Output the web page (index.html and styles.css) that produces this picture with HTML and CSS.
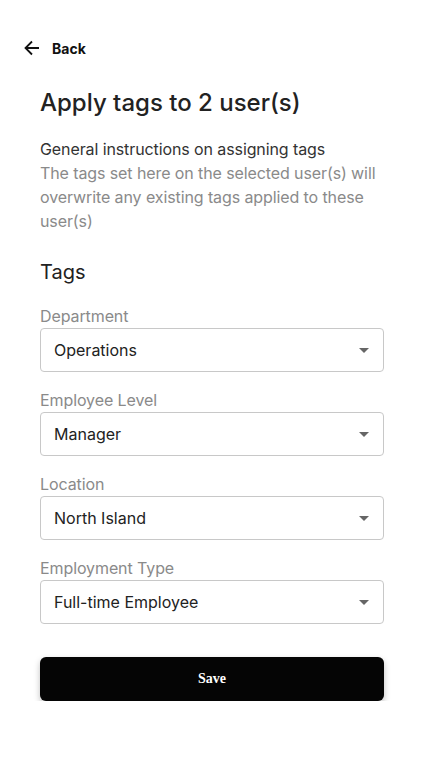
FILE: index.html
```html
<!DOCTYPE html>
<html>
<head>
<meta charset="utf-8">
<link rel="stylesheet" href="styles.css">
</head>
<body>
<div class="page">
  <a class="back" href="#">
    <svg class="back-icon" width="18" height="18" viewBox="0 0 18 18"><path d="M16 9H3M9 2.5L2.5 9L9 15.5" fill="none" stroke="#111" stroke-width="1.8"/></svg>
    <span>Back</span>
  </a>
  <div class="content">
    <h1 class="title">Apply tags to 2 user(s)</h1>
    <p class="intro">General instructions on assigning tags</p>
    <p class="note">The tags set here on the selected user(s) will overwrite any existing tags applied to these user(s)</p>
    <h2 class="section">Tags</h2>
    <div class="field">
      <div class="label">Department</div>
      <div class="select"><span>Operations</span><span class="caret"></span></div>
    </div>
    <div class="field">
      <div class="label">Employee Level</div>
      <div class="select"><span>Manager</span><span class="caret"></span></div>
    </div>
    <div class="field">
      <div class="label">Location</div>
      <div class="select"><span>North Island</span><span class="caret"></span></div>
    </div>
    <div class="field">
      <div class="label">Employment Type</div>
      <div class="select"><span>Full-time Employee</span><span class="caret"></span></div>
    </div>
    <button class="save">Save</button>
  </div>
</div>
</body>
</html>
```
FILE: styles.css
```css
* { box-sizing: border-box; }
body { margin: 0; background: #fff; font-family: Inter, "Noto Sans", sans-serif; color: #222; }
.page { padding: 38px 0 0 0; }
.back { display: flex; align-items: center; gap: 11px; margin-left: 23px; text-decoration: none; color: #111; font-weight: 700; font-size: 14px; height: 20px; }
.back-icon { display: block; }
.content { padding: 0 38px 0 40px; }
.title { margin: 29px 0 0 0; font-size: 24px; font-weight: 500; line-height: 32px; color: #222; letter-spacing: 0; }
.intro { margin: 18px 0 0 0; font-size: 16px; line-height: 24px; color: #333; letter-spacing: -0.1px; }
.note { margin: 0; font-size: 16px; line-height: 24px; color: #8a8a8a; letter-spacing: -0.1px; }
.section { margin: 26px 0 0 0; font-size: 20px; font-weight: 400; line-height: 26px; color: #222; }
.field { margin-top: 20px; }
.field + .field { margin-top: 17px; }
.label { font-size: 16px; line-height: 23px; color: #8a8a8a; letter-spacing: -0.1px; }
.select { height: 44px; border: 1px solid #c8c8c8; border-radius: 4px; display: flex; align-items: center; justify-content: space-between; padding: 0 13px 0 13px; font-size: 16px; color: #222; }
.caret { width: 0; height: 0; border-left: 5px solid transparent; border-right: 5px solid transparent; border-top: 5px solid #666; margin-right: 1px; }
.save { margin-top: 33px; width: 100%; height: 44px; background: #050505; color: #fff; border: 0; border-radius: 6px; font-family: "Liberation Serif", serif; font-weight: 700; font-size: 14px; box-shadow: 0 3px 6px rgba(0,0,0,0.25); }
```
